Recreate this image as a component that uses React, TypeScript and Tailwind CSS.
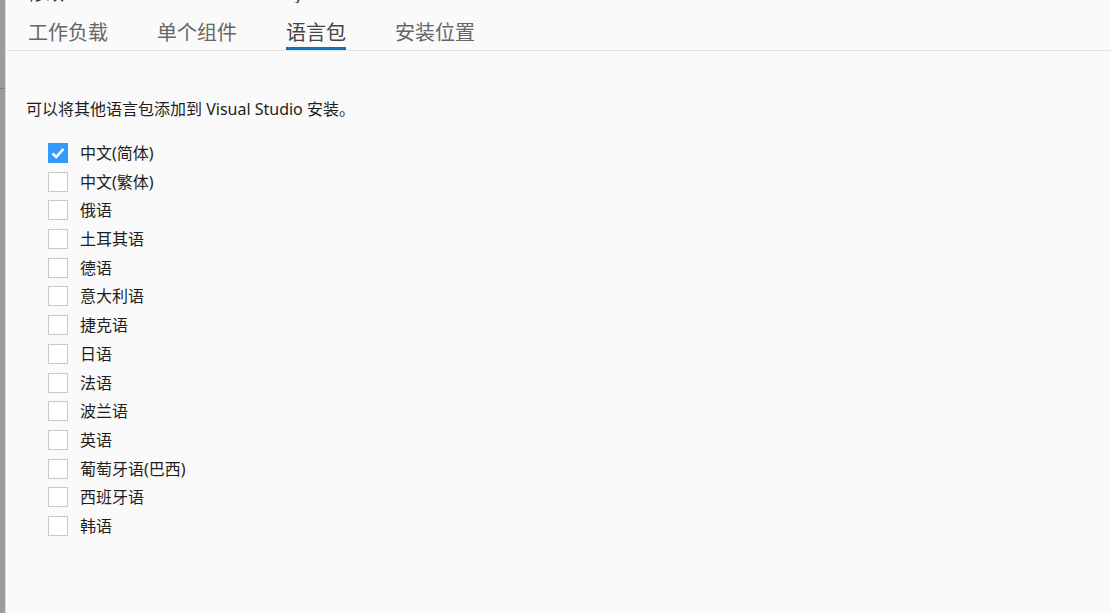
import React from 'react';

const tabs = ['工作负载', '单个组件', '语言包', '安装位置'];

const languages: { name: string; checked: boolean }[] = [
  { name: '中文(简体)', checked: true },
  { name: '中文(繁体)', checked: false },
  { name: '俄语', checked: false },
  { name: '土耳其语', checked: false },
  { name: '德语', checked: false },
  { name: '意大利语', checked: false },
  { name: '捷克语', checked: false },
  { name: '日语', checked: false },
  { name: '法语', checked: false },
  { name: '波兰语', checked: false },
  { name: '英语', checked: false },
  { name: '葡萄牙语(巴西)', checked: false },
  { name: '西班牙语', checked: false },
  { name: '韩语', checked: false },
];

const Checkbox: React.FC<{ checked: boolean }> = ({ checked }) =>
  checked ? (
    <span className="flex h-5 w-5 items-center justify-center bg-[#3399ff]">
      <svg viewBox="0 0 20 20" className="h-5 w-5">
        <path d="M4.5 10.5 L8.2 14 L15.5 5.8" fill="none" stroke="#fff" strokeWidth="2.6" />
      </svg>
    </span>
  ) : (
    <span className="block h-5 w-5 border border-[#c8c8c8] bg-white" />
  );

export default function App() {
  return (
    <div
      className="flex h-[613px] w-[1111px] overflow-hidden bg-[#fafafa] text-[#1e1e1e]"
      style={{ fontFamily: '"Noto Sans", "Noto Sans CJK SC", sans-serif' }}
    >
      <div className="flex w-[5px] flex-col bg-[#9b9b9b]">
        <div className="h-[88px]" />
        <div className="h-px bg-[#7d7d7d]" />
      </div>
      <div className="w-px bg-[#dcdce6]" />
      <div className="flex min-w-0 flex-1 flex-col">
        <div className="h-[3px] overflow-hidden">
          <div className="-mt-[17px] pl-[22px] text-[18px] leading-[20px] text-[#333]">
            修改 — Visual Studio Community 2017
          </div>
        </div>
        <div className="flex h-[48px] gap-[49px] border-b border-[#e3e3e3] pl-[22px] pt-[17px]">
          {tabs.map((t) => (
            <div key={t} className="flex flex-col">
              <span className={`text-[20px] leading-[26px] ${t === '语言包' ? 'text-[#444]' : 'text-[#666]'}`}>
                {t}
              </span>
              {t === '语言包' && <span className="mt-[1px] h-[3px] bg-[#0e70c0]" />}
            </div>
          ))}
        </div>
        <p className="mt-[47px] pl-[20px] text-[16px] leading-[22px]">可以将其他语言包添加到 Visual Studio 安装。</p>
        <div className="mt-[23px] flex flex-col gap-[8.7px] pl-[42px]">
          {languages.map((l) => (
            <div key={l.name} className="flex h-5 items-center gap-3">
              <Checkbox checked={l.checked} />
              <span className="text-[16px] leading-5">{l.name}</span>
            </div>
          ))}
        </div>
      </div>
    </div>
  );
}
